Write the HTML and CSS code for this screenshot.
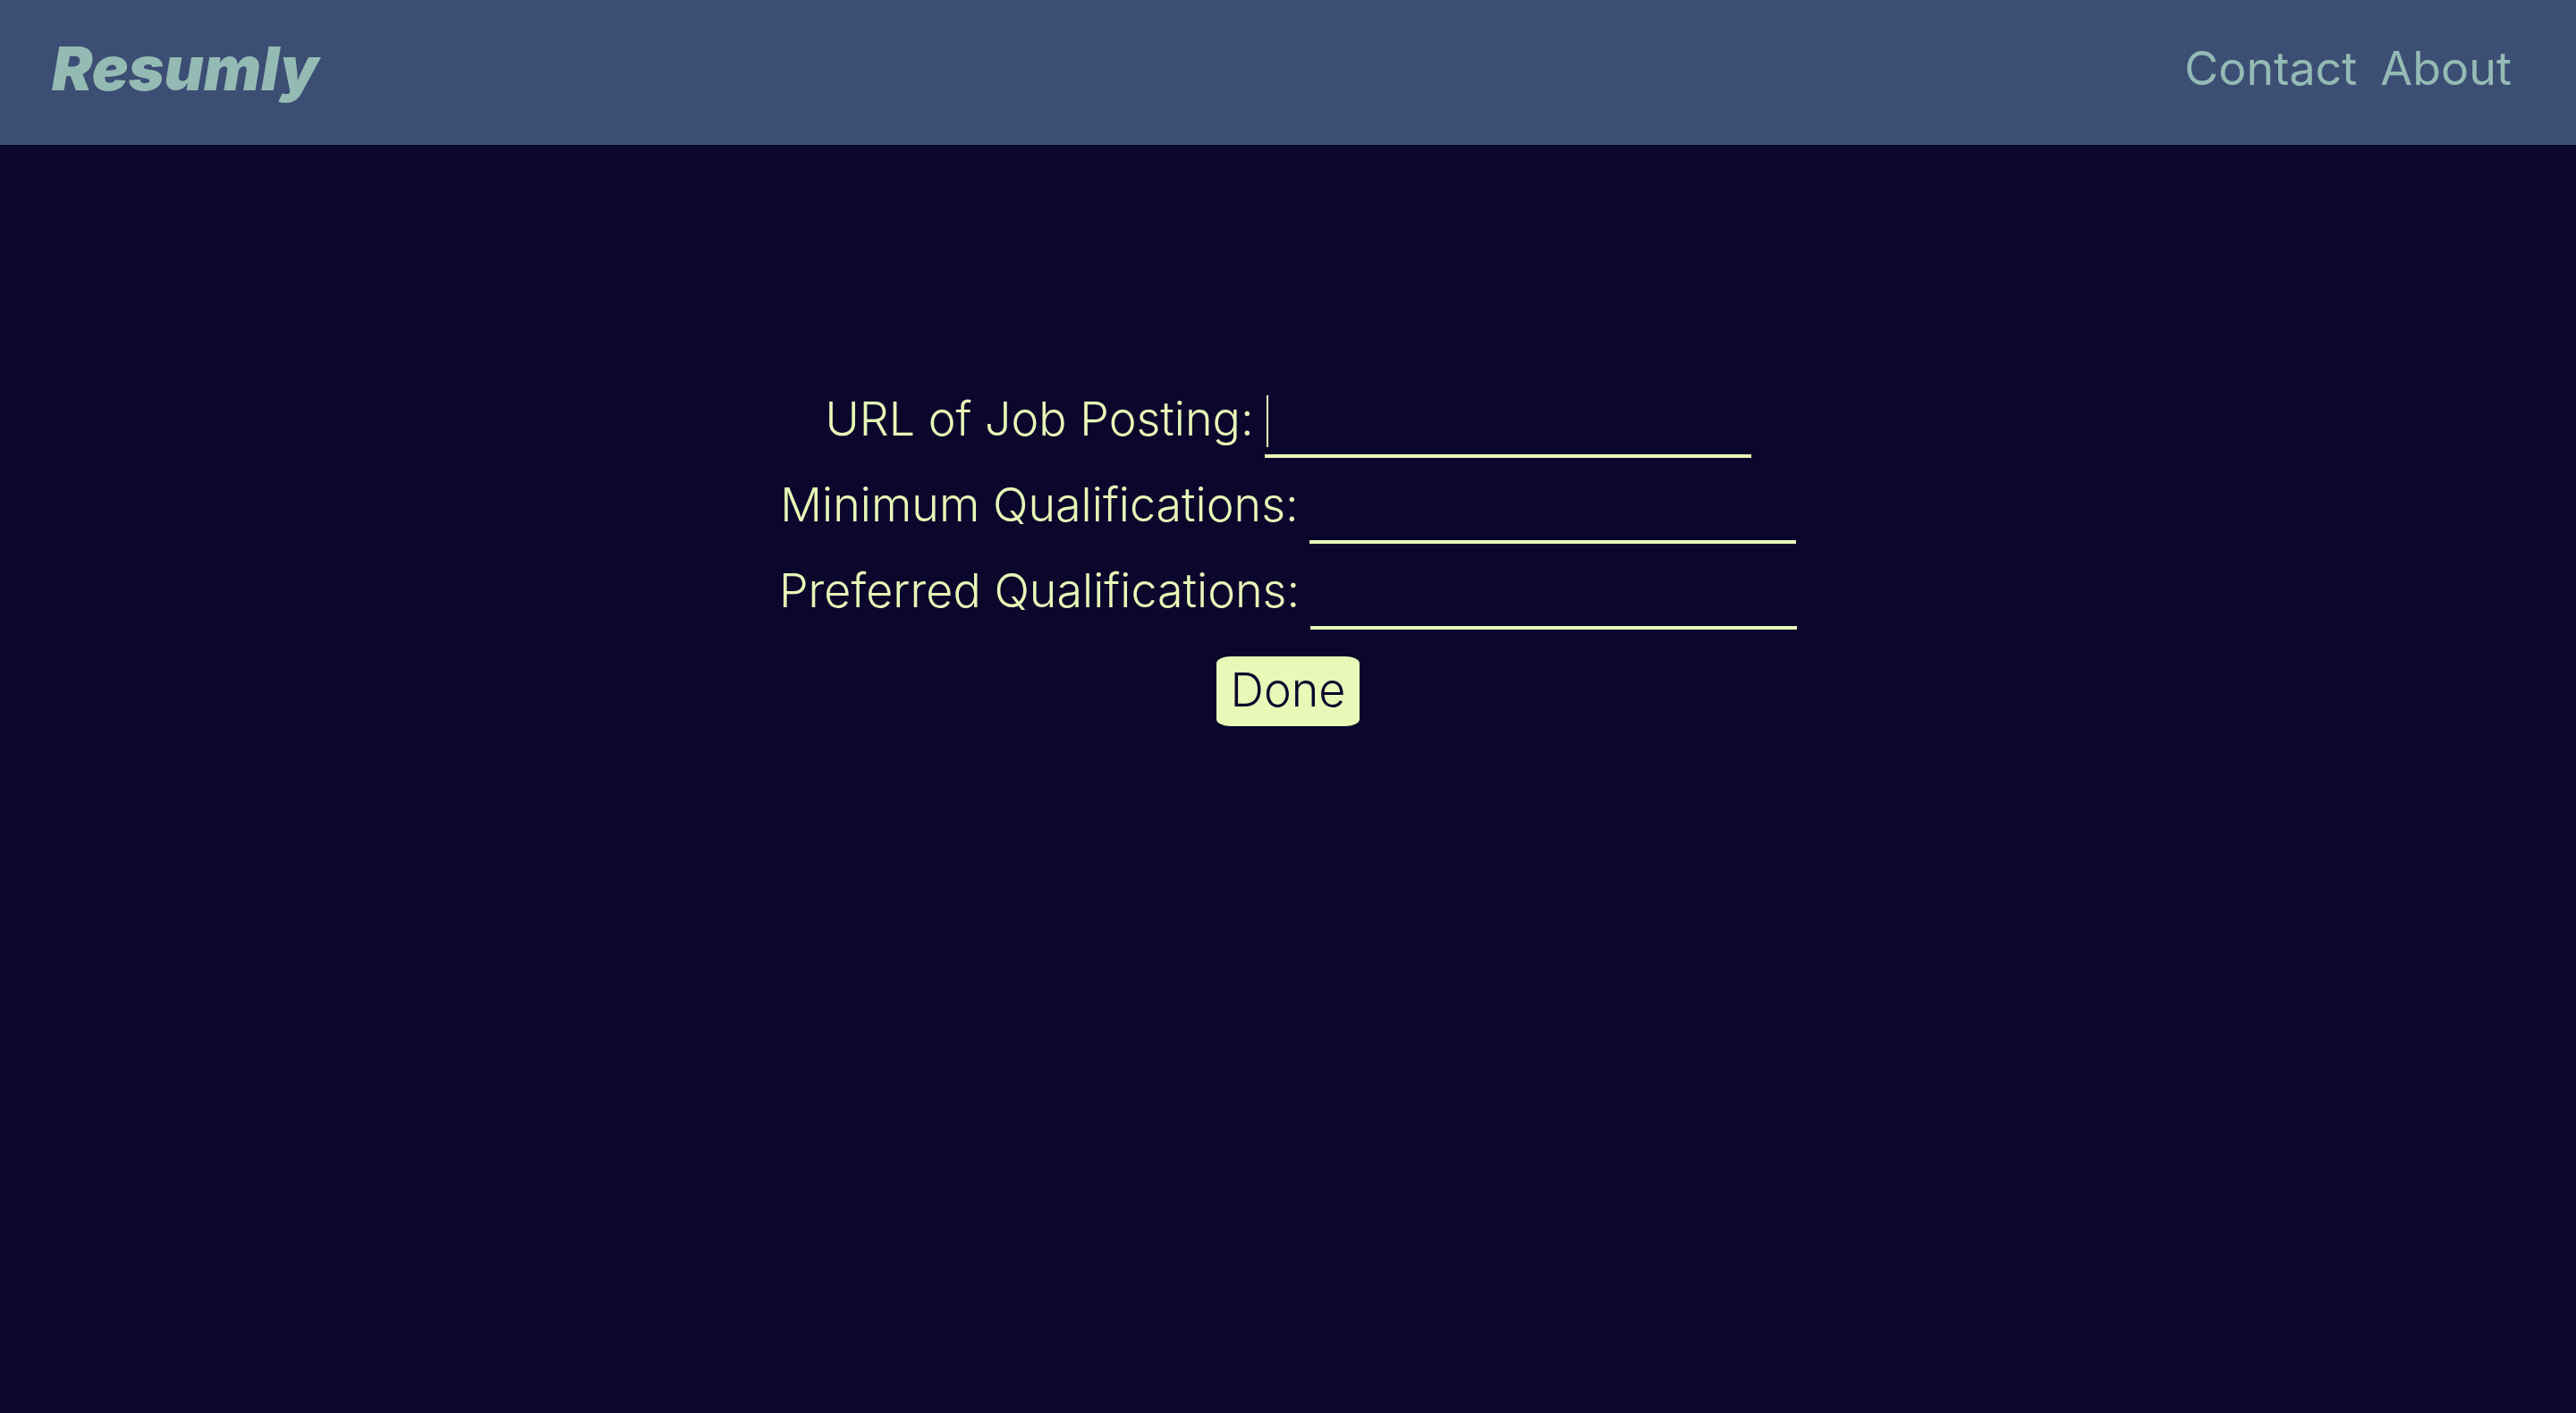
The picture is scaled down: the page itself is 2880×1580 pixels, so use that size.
FILE: index.html
```html
<!DOCTYPE html>
<html lang="en">
<head>
<meta charset="utf-8">
<meta name="viewport" content="width=device-width, initial-scale=1">
<title>Resumly</title>
<link rel="stylesheet" href="styles.css">
</head>
<body>
<header class="header">
  <h1 class="logo">Resumly</h1>
  <nav class="nav">
    <a class="nav-link" href="#contact">Contact</a>
    <a class="nav-link" href="#about">About</a>
  </nav>
</header>
<main class="main">
  <form class="form">
    <div class="row">
      <label class="label" for="url">URL of Job Posting:</label>
      <input class="field field-active" id="url" name="url" type="text">
    </div>
    <div class="row">
      <label class="label" for="minimum">Minimum Qualifications:</label>
      <input class="field" id="minimum" name="minimum" type="text">
    </div>
    <div class="row">
      <label class="label" for="preferred">Preferred Qualifications:</label>
      <input class="field" id="preferred" name="preferred" type="text">
    </div>
    <button class="button" type="button">Done</button>
  </form>
</main>
</body>
</html>
```
FILE: styles.css
```css
:root {
  --navy: #0b062c;
  --slate: #3d4e75;
  --sage: #94bbb3;
  --lime: #e9f7b7;
}

* {
  box-sizing: border-box;
}

body {
  margin: 0;
  min-height: 100vh;
  background: var(--navy);
  color: var(--lime);
  font: 300 52px/60px Inter, "Liberation Sans", sans-serif;
}

.header {
  display: flex;
  justify-content: space-between;
  align-items: flex-start;
  padding: 28px 72px 38px 58px;
  background: var(--slate);
  color: var(--sage);
}

.logo {
  margin: 0;
  font: italic 900 68px/96px Inter, sans-serif;
}

.nav {
  display: flex;
  gap: 26px;
  padding-top: 19px;
  font-weight: 400;
}

.nav-link {
  color: inherit;
  text-decoration: none;
}

.main {
  padding-top: 270px;
}

.form {
  display: flex;
  flex-direction: column;
  align-items: center;
  gap: 16px;
}

.row {
  display: flex;
  justify-content: center;
  align-items: center;
  gap: 12px;
}

.label {
  padding-bottom: 6px;
}

.field {
  width: 544px;
  height: 80px;
  padding: 4px 2px;
  border: 0;
  border-bottom: 4px solid var(--lime);
  border-radius: 0;
  outline: none;
  background: transparent;
  color: inherit;
  font: inherit;
}

/* Text cursor in the active field */
.field-active {
  background: linear-gradient(var(--lime), var(--lime)) 2px 10px / 2px 58px no-repeat;
}

.button {
  margin-top: 14px;
  padding: 8px 16px 10px;
  border: 0;
  border-radius: 10%;
  background: var(--lime);
  color: var(--navy);
  font: inherit;
}
```
